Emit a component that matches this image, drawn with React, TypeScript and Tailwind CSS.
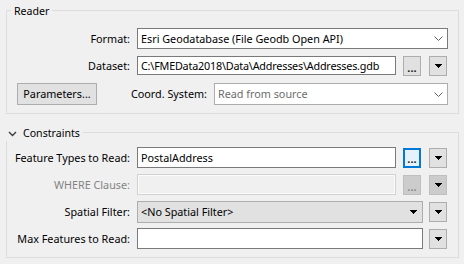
import React from "react";

const Tri = ({ color = "#000" }: { color?: string }) => (
  <svg width="7" height="4" viewBox="0 0 7 4" shapeRendering="crispEdges">
    <path d="M0 0H7V1H6V2H5V3H4V4H3V3H2V2H1V1H0Z" fill={color} />
  </svg>
);

const Chevron = () => (
  <svg width="9" height="5" viewBox="0 0 9 5">
    <polyline points="0.5,0.5 4.5,4.5 8.5,0.5" fill="none" stroke="#606060" strokeWidth="1" />
  </svg>
);

const DropBtn = ({ disabled = false }: { disabled?: boolean }) => (
  <div
    className={`ml-[8px] mr-[1px] w-[18px] h-[20px] border flex items-center justify-center ${
      disabled ? "border-[#bfbfbf] bg-[#cccccc]" : "border-[#adadad] bg-[#e1e1e1]"
    }`}
  >
    <Tri />
  </div>
);

const DotsBtn = ({ focused = false, disabled = false }: { focused?: boolean; disabled?: boolean }) => (
  <div
    className={`ml-[7px] w-[18px] h-[20px] flex items-end justify-center pb-[2px] font-bold text-[11px] leading-[10px] ${
      focused
        ? "border-2 border-[#0078d7] bg-[#e5f1fb] text-[#1a1a1a]"
        : disabled
        ? "border border-[#bfbfbf] bg-[#cccccc] text-[#8a8a8a]"
        : "border border-[#adadad] bg-[#e1e1e1] text-[#1a1a1a]"
    }`}
  >
    ...
  </div>
);

const Label = ({ children, disabled = false }: { children: React.ReactNode; disabled?: boolean }) => (
  <div className={`w-[123px] shrink-0 text-right mr-[7px] ${disabled ? "text-[#838383]" : "text-black"}`}>{children}</div>
);

export default function App() {
  return (
    <div className="w-[464px] h-[264px] bg-[#f0f0f0] pt-[10px] pl-[6px] font-['Noto_Sans',sans-serif] text-[10.8px] leading-[14px] text-black">
      {/* Reader */}
      <div className="relative w-[453px] h-[104px] border border-[#dcdcdc] pt-[17px] pr-[10px] flex flex-col">
        <div className="absolute left-[4px] top-[-8px] px-[3px] bg-[#f0f0f0] text-[10.6px] leading-[16px]">Reader</div>
        <div className="flex items-center h-[21px]">
          <Label>Format:</Label>
          <div className="flex-1 h-[21px] border border-[#7a7a7a] bg-white flex items-center pl-[3px] pr-[4px]">
            <span className="flex-1">Esri Geodatabase (File Geodb Open API)</span>
            <Chevron />
          </div>
        </div>
        <div className="flex items-center h-[19px] mt-[7px]">
          <Label>Dataset:</Label>
          <div className="flex-1 h-[19px] border border-[#7a7a7a] bg-white flex items-center pl-[3px] tracking-[-0.2px]">
            C:\FMEData2018\Data\Addresses\Addresses.gdb
          </div>
          <DotsBtn />
          <DropBtn />
        </div>
        <div className="flex items-center h-[22px] mt-[8px]">
          <div className="ml-[10px] w-[80px] h-[22px] border border-[#adadad] bg-[#e1e1e1] flex items-center justify-center">
            Parameters...
          </div>
          <div className="flex-1 text-right mr-[7px]">Coord. System:</div>
          <div className="w-[234px] h-[22px] border border-[#adadad] bg-white flex items-center pl-[3px] pr-[4px]">
            <span className="flex-1 text-[#6d6d6d]">Read from source</span>
            <Chevron />
          </div>
        </div>
      </div>

      {/* Constraints */}
      <div className="relative mt-[18px] w-[453px] h-[126px] border border-[#dcdcdc] pt-[14px] pr-[10px] flex flex-col">
        <div className="absolute left-[-1px] top-[-8px] pl-[2px] pr-[3px] bg-[#f0f0f0] text-[10.6px] leading-[16px] flex items-center">
          <svg width="9" height="6" viewBox="0 0 9 6" className="mr-[6px] mt-[1px]">
            <polyline points="1,1 4.5,4.5 8,1" fill="none" stroke="#3c3c3c" strokeWidth="1.4" />
          </svg>
          Constraints
        </div>
        <div className="flex items-center h-[21px]">
          <Label>Feature Types to Read:</Label>
          <div className="flex-1 h-[21px] border border-[#7a7a7a] bg-white flex items-center pl-[3px]">PostalAddress</div>
          <DotsBtn focused />
          <DropBtn />
        </div>
        <div className="flex items-center h-[21px] mt-[6px]">
          <Label disabled>WHERE Clause:</Label>
          <div className="flex-1 h-[21px] border border-[#d2d2d2] bg-[#f0f0f0] shadow-[inset_0_0_0_1px_#fbfbfb]"></div>
          <DotsBtn disabled />
          <DropBtn disabled />
        </div>
        <div className="flex items-center h-[21px] mt-[6px]">
          <Label>Spatial Filter:</Label>
          <div className="flex-1 h-[22px] border border-[#adadad] bg-[#e1e1e1] flex items-center pl-[3px] pr-[5px]">
            <span className="flex-1">&lt;No Spatial Filter&gt;</span>
            <Tri />
          </div>
          <div className="ml-[6px] mr-[1px] w-[18px] h-[20px] border border-[#adadad] bg-[#e1e1e1] flex items-center justify-center">
            <Tri />
          </div>
        </div>
        <div className="flex items-center h-[21px] mt-[6px]">
          <Label>Max Features to Read:</Label>
          <div className="flex-1 h-[21px] border border-[#7a7a7a] bg-white"></div>
          <div className="ml-[6px] mr-[1px] w-[18px] h-[20px] border border-[#adadad] bg-[#e1e1e1] flex items-center justify-center">
            <Tri />
          </div>
        </div>
      </div>
    </div>
  );
}
